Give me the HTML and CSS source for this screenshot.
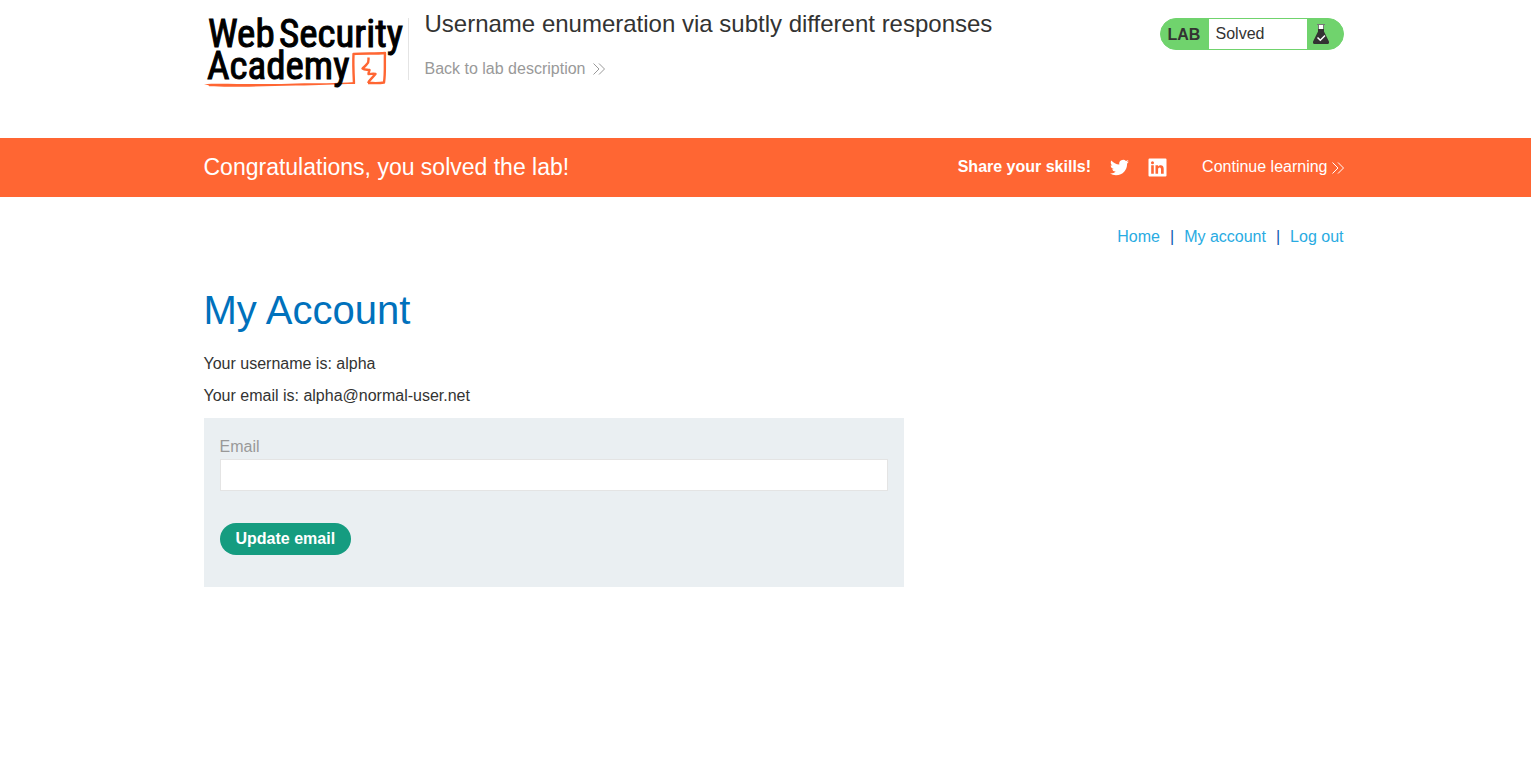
FILE: index.html
```html
<!DOCTYPE html>
<html lang="en">
<head>
<meta charset="utf-8">
<title>Username enumeration via subtly different responses</title>
<link rel="stylesheet" href="styles.css">
</head>
<body>
<header class="lab-header">
  <div class="container header-row">
    <svg class="logo" viewBox="0 0 204 74" role="img" aria-label="Web Security Academy">
      <path class="logo-tail" d="M0 66C20 65 60 67 92 65.500C114 65 132 65.500 151 64V66C132 66 114 67.500 92 67.500C60 68 28 69.500 5 68.300C6 67.500 3 67 0 66z"/>
      <path class="logo-line" d="M150 65.500C149.500 55 149 46 149.500 36C160 35 171 36 181 35C180.500 46 181.500 55 180 64.500C175 65.500 170 65 164 65"/>
      <path class="logo-line" d="M164.500 39.500C164.500 43 165 44 163 46C161 48.500 160 49 158.500 50.500C160.500 52 163 51.500 165.500 52C165 53.500 164.500 54.500 164.500 56C167 56 169.500 55.500 171.500 56C169 59 166 61.500 164 65"/>
      <text class="logo-text" x="4" y="29">Web</text>
      <text class="logo-text" x="75" y="29">Security</text>
      <text class="logo-text" x="3" y="61">Academy</text>
    </svg>
    <div class="title-block">
      <h2 class="title">Username enumeration via subtly different responses</h2>
      <a class="back-link" href="#">Back to lab description
        <svg class="chevrons" viewBox="0 0 12 12" aria-hidden="true"><path d="M.5.500 6 6 .5 11.500M6 .5 11.500 6 6 11.500"/></svg>
      </a>
    </div>
    <div class="lab-status">
      <span class="lab-tag">LAB</span>
      <span class="lab-state">Solved</span>
      <span class="lab-flask">
        <svg class="flask" viewBox="0 0 16 20" aria-hidden="true">
          <path fill="#fff" d="M5.500 1h5v5h-5z"/>
          <path fill="#777" d="M4 0h8v1H4zM5 1h1v4H5zM10 1h1v4h-1z"/>
          <path fill="#333332" d="M5 5h6v2.500l4.800 9.800c.6 1.400 0 2.700-1.500 2.700H1.700C.2 20-.4 18.700.2 17.300L5 7.500z"/>
          <path fill="none" stroke="#fff" stroke-width="1.500" d="M4.500 13.500 7.300 16.200 12 11.500"/>
        </svg>
      </span>
    </div>
  </div>
</header>

<section class="banner">
  <div class="container banner-row">
    <h4 class="banner-title">Congratulations, you solved the lab!</h4>
    <div class="banner-actions">
      <span class="share-label">Share your skills!</span>
      <a class="social" href="#" aria-label="Share on Twitter">
        <svg viewBox="0 0 24 24" aria-hidden="true"><path d="M23.950 4.570a10 10 0 0 1-2.820.770 4.960 4.960 0 0 0 2.160-2.720c-.950.550-2 .950-3.130 1.180a4.920 4.920 0 0 0-8.380 4.480C7.690 8.090 4.070 6.130 1.640 3.160a4.820 4.820 0 0 0-.670 2.480c0 1.710.870 3.210 2.190 4.100a4.900 4.900 0 0 1-2.230-.620v.060a4.920 4.920 0 0 0 3.950 4.830 5 5 0 0 1-2.210.080 4.940 4.940 0 0 0 4.600 3.420A9.870 9.870 0 0 1 0 19.540a13.990 13.990 0 0 0 7.550 2.210c9.050 0 14-7.500 14-13.980 0-.210 0-.420-.020-.630a9.940 9.940 0 0 0 2.420-2.570z"/></svg>
      </a>
      <a class="social" href="#" aria-label="Share on LinkedIn">
        <svg viewBox="0 0 19 19" aria-hidden="true"><path fill-rule="evenodd" d="M1.500.500h16a1 1 0 0 1 1 1v16a1 1 0 0 1-1 1h-16a1 1 0 0 1-1-1v-16a1 1 0 0 1 1-1zM3.200 7.300v8.400h2.600V7.300zM4.500 3.200a1.500 1.500 0 1 0 0 3 1.500 1.500 0 0 0 0-3zM7.500 7.300v8.400h2.600v-4.200c0-2.600 2.900-2.700 2.900 0v4.200h2.700v-5c0-4.200-4-4.300-5.600-2.100V7.300z"/></svg>
      </a>
      <a class="continue-link" href="#">Continue learning
        <svg class="chevrons" viewBox="0 0 12 12" aria-hidden="true"><path d="M.5.500 6 6 .5 11.500M6 .5 11.500 6 6 11.500"/></svg>
      </a>
    </div>
  </div>
</section>

<main class="page">
  <div class="container">
    <nav class="top-links">
      <a href="#">Home</a><span>|</span><a href="#">My account</a><span>|</span><a href="#">Log out</a>
    </nav>
    <h1 class="heading">My Account</h1>
    <p class="info">Your username is: alpha</p>
    <p class="info">Your email is: alpha@normal-user.net</p>
    <form class="email-form">
      <label class="email-label" for="email">Email</label>
      <input class="email-input" id="email" type="email" name="email">
      <button class="update-button" type="submit">Update email</button>
    </form>
  </div>
</main>
</body>
</html>
```
FILE: styles.css
```css
* {
  box-sizing: border-box;
}

body {
  margin: 0;
  background: #fff;
  color: #333332;
  font: 16px/24px "Liberation Sans", Arial, sans-serif;
}

a {
  text-decoration: none;
}

.lab-header,
.banner,
.page {
  padding-left: 16px;
}

.container {
  max-width: 1140px;
  margin: 0 auto;
}

.header-row {
  display: flex;
  align-items: flex-start;
  min-height: 138px;
}

.logo {
  flex: none;
  width: 204px;
  height: 74px;
  margin-top: 18px;
  overflow: visible;
}

.logo-text {
  font: 39px "Liberation Sans Narrow", "Roboto Condensed", Roboto, sans-serif;
  fill: #000;
  stroke: #000;
  stroke-width: 1px;
}

.logo-line {
  fill: none;
  stroke: #ff6633;
  stroke-width: 2.4px;
  stroke-linejoin: round;
}

.logo-tail {
  fill: #ff6633;
}

.title-block {
  flex: 1;
  height: 62px;
  margin-top: 18px;
  padding-left: 16px;
  border-left: 1px solid #e4e4e4;
}

.title {
  margin: -10px 0 17px;
  font-size: 24px;
  line-height: 32px;
  font-weight: 400;
}

.back-link {
  display: inline-flex;
  align-items: center;
  gap: 8px;
  color: #999;
}

.chevrons {
  width: 12px;
  height: 12px;
  fill: none;
  stroke: currentColor;
  stroke-width: 1px;
}

.lab-status {
  display: flex;
  width: 184px;
  height: 32px;
  margin-top: 18px;
  border: 1px solid #70d36d;
  border-radius: 16px;
  background: #70d36d;
  line-height: 30px;
  overflow: hidden;
}

.lab-tag {
  width: 48px;
  padding-left: 7px;
  font-weight: 700;
  line-height: 32px;
}

.lab-state {
  flex: 1;
  padding-left: 7px;
  background: #fff;
}

.lab-flask {
  width: 36px;
  padding: 5px 0 0 6px;
}

.flask {
  display: block;
  width: 16px;
  height: 20px;
}

.banner {
  background: #ff6633;
  color: #fff;
}

.banner-row {
  display: flex;
  align-items: center;
  justify-content: space-between;
  min-height: 59px;
  padding-bottom: 2px;
}

.banner-title {
  margin: 0;
  font-size: 23px;
  font-weight: 400;
}

.banner-actions {
  display: flex;
  align-items: center;
}

.share-label {
  font-weight: 700;
}

.social {
  margin-left: 19px;
  padding-top: 2px;
}

.social svg {
  display: block;
  width: 19px;
  height: 19px;
  fill: #fff;
}

.continue-link {
  display: inline-flex;
  align-items: center;
  gap: 4px;
  margin-left: 35px;
  color: #fff;
}

.continue-link .chevrons {
  margin-top: 2px;
}

.top-links {
  display: flex;
  justify-content: flex-end;
  gap: 10px;
  padding-top: 28px;
  color: #0b5cad;
}

.top-links a {
  color: #29abe2;
}

.heading {
  margin: 37px 0 14px;
  color: #0071bc;
  font-size: 40px;
  line-height: 48px;
  font-weight: 400;
}

.info {
  margin: 0;
  line-height: 32px;
}

.info + .email-form {
  margin-top: 6px;
}

.email-form {
  max-width: 700px;
  padding: 17px 16px 32px;
  background: #eaeff2;
}

.email-label {
  display: block;
  color: #999;
}

.email-input {
  display: block;
  width: 100%;
  height: 32px;
  padding: 0 8px;
  border: 1px solid #e4e4e4;
  background: #fff;
  font: inherit;
}

.update-button {
  display: block;
  height: 32px;
  margin-top: 32px;
  padding: 0 16px;
  border: 0;
  border-radius: 16px;
  background: #159c80;
  color: #fff;
  font: 700 16px/32px "Liberation Sans", Arial, sans-serif;
}
```
